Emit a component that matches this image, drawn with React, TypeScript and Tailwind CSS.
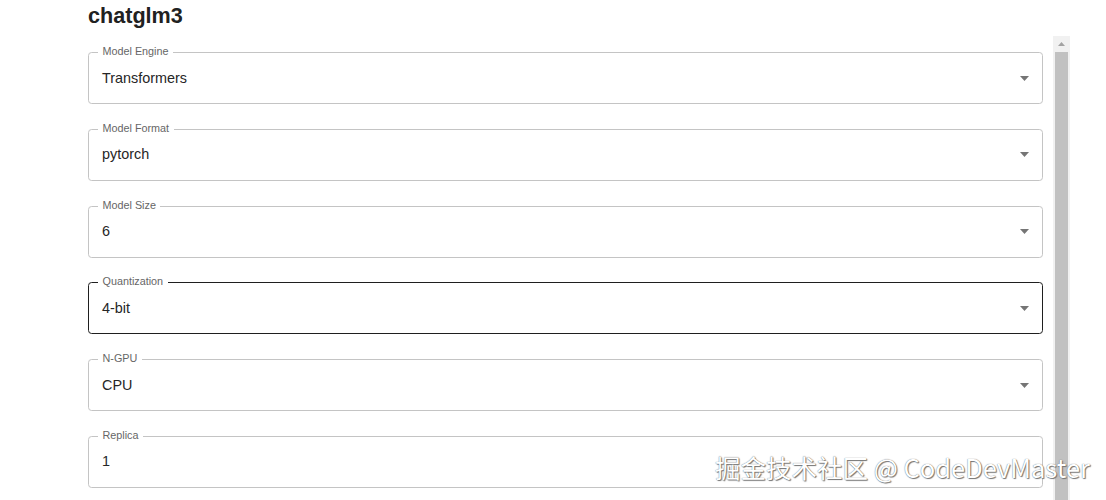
import { memo } from "react";

interface Field {
  label: string;
  value: string;
  select?: boolean;
  focused?: boolean;
}

const fields: Field[] = [
  { label: "Model Engine", value: "Transformers", select: true },
  { label: "Model Format", value: "pytorch", select: true },
  { label: "Model Size", value: "6", select: true },
  { label: "Quantization", value: "4-bit", select: true, focused: true },
  { label: "N-GPU", value: "CPU", select: true },
  { label: "Replica", value: "1" },
];

const OutlinedField = memo<Field>(({ label, value, select, focused }) => {
  return (
    <div
      className={
        focused
          ? "relative h-[52px] shrink-0 rounded-[3.6px] border border-[#1f1f1f] flex items-center pl-[13px] pr-[13px]"
          : "relative h-[52px] shrink-0 rounded-[3.6px] border border-[#c4c4c4] flex items-center pl-[13px] pr-[13px]"
      }
    >
      <span className="absolute left-[9px] -top-[8px] bg-white px-[4.5px] text-[10.8px] leading-[12px] text-[#666666]">
        {label}
      </span>
      <span className="flex-1 text-[14.4px] leading-[17px] text-[#262626]">{value}</span>
      {select && (
        <svg width="9" height="5" viewBox="0 0 9 5" className="shrink-0">
          <polygon points="0,0 9,0 4.5,5" fill="#757575" />
        </svg>
      )}
    </div>
  );
});

OutlinedField.displayName = "OutlinedField";

export default function App() {
  return (
    <div className="relative h-[500px] w-[1106px] overflow-hidden bg-white font-['Liberation_Sans',Arial,sans-serif]">
      <div className="h-[36px] pl-[88px] pt-[3px]">
        <h1 className="text-[21.6px] font-bold leading-[26px] text-[#212121]">chatglm3</h1>
      </div>

      <div className="flex h-[464px] pl-[88px] gap-[10px]">
        {/* form */}
        <div className="w-[955px] shrink-0 flex flex-col gap-[24.8px] pt-[16px]">
          {fields.map((f) => (
            <OutlinedField key={f.label} {...f} />
          ))}
        </div>

        {/* scrollbar */}
        <div className="w-[17px] shrink-0 bg-[#f1f1f1] flex flex-col">
          <div className="h-[16px] flex items-center justify-center">
            <svg width="7" height="4" viewBox="0 0 7 4">
              <polygon points="3.5,0 7,4 0,4" fill="#a3a3a3" />
            </svg>
          </div>
          <div className="flex-1 mx-[2px] bg-[#c1c1c1]" />
        </div>
      </div>

      {/* watermark */}
      <div className="absolute right-[16px] bottom-[19px] text-[25.5px] leading-[28px] text-white font-['Noto_Sans_CJK_SC','Noto_Sans',sans-serif] [text-shadow:0_0_1px_#555,1px_1px_1px_#777]">
        掘金技术社区 @ CodeDevMaster
      </div>
    </div>
  );
}
